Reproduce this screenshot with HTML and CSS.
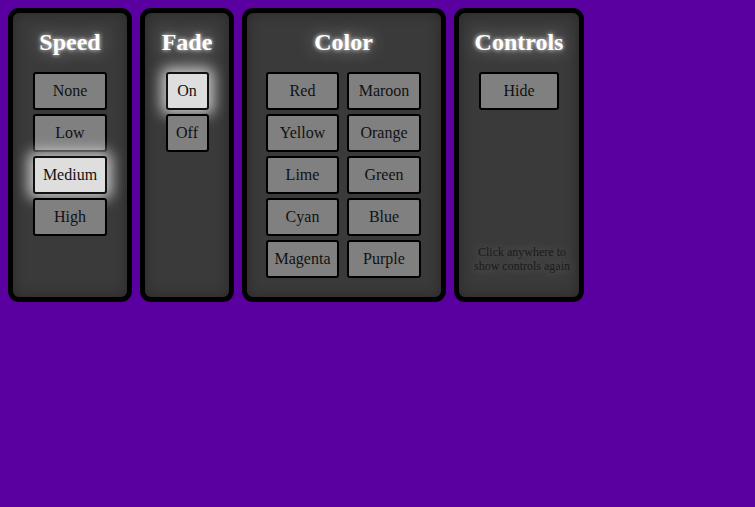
FILE: index.html
```html
<!DOCTYPE html>
<html>
<head>
<meta charset="utf-8">
<link rel="stylesheet" href="styles.css">
</head>
<body>
<div class="panels">
  <div class="panel panel-speed">
    <h2 class="title">Speed</h2>
    <div class="stack">
      <button class="btn w-speed">None</button>
      <button class="btn w-speed">Low</button>
      <button class="btn w-speed active">Medium</button>
      <button class="btn w-speed">High</button>
    </div>
  </div>
  <div class="panel panel-fade">
    <h2 class="title">Fade</h2>
    <div class="stack">
      <button class="btn w-fade active">On</button>
      <button class="btn w-fade">Off</button>
    </div>
  </div>
  <div class="panel panel-color">
    <h2 class="title">Color</h2>
    <div class="grid">
      <button class="btn">Red</button>
      <button class="btn">Maroon</button>
      <button class="btn">Yellow</button>
      <button class="btn">Orange</button>
      <button class="btn">Lime</button>
      <button class="btn">Green</button>
      <button class="btn">Cyan</button>
      <button class="btn">Blue</button>
      <button class="btn">Magenta</button>
      <button class="btn">Purple</button>
    </div>
  </div>
  <div class="panel panel-controls">
    <h2 class="title">Controls</h2>
    <div class="stack">
      <button class="btn w-hide">Hide</button>
    </div>
    <p class="hint">Click anywhere to<br>show controls again</p>
  </div>
</div>
</body>
</html>
```

FILE: styles.css
```css
html, body {
  margin: 0;
  padding: 0;
}
body {
  background: #5a00a0;
  font-family: "Liberation Serif", "Times New Roman", serif;
  width: 755px;
  height: 507px;
  overflow: hidden;
}
.panels {
  display: flex;
  align-items: stretch;
  gap: 8px;
  padding: 8px;
}
.panel {
  box-sizing: border-box;
  border: 5px solid #000;
  border-radius: 11px;
  background: #3a3a3a;
  box-shadow: inset 0 0 14px rgba(0, 0, 0, 0.3);
  display: flex;
  flex-direction: column;
  align-items: center;
  padding: 15px 0 19px;
}
.panel-speed { width: 124px; }
.panel-fade { width: 94px; }
.panel-color { width: 204px; padding-right: 1px; }
.panel-controls { width: 130px; }
.title {
  margin: 0 0 16px;
  font-size: 24px;
  line-height: 28px;
  font-weight: bold;
  color: #fff;
  text-shadow: 0 0 4px rgba(255, 255, 255, 0.9), 0 0 18px rgba(255, 255, 255, 0.55);
}
.stack {
  display: flex;
  flex-direction: column;
  gap: 4px;
}
.grid {
  display: grid;
  grid-template-columns: 73px 74px;
  column-gap: 8px;
  row-gap: 4px;
}
.btn {
  box-sizing: border-box;
  height: 38px;
  margin: 0;
  padding: 0 4px;
  border: 2px solid #000;
  border-radius: 3px;
  background: #808080;
  color: #111;
  font-family: "Liberation Serif", "Times New Roman", serif;
  font-size: 16px;
  line-height: 18px;
  white-space: nowrap;
  text-align: center;
}
.w-speed { width: 74px; }
.w-fade { width: 43px; }
.w-hide { width: 80px; }
.btn.active {
  background: #dedede;
  border-color: #111;
  box-shadow: 0 0 14px 5px rgba(255, 255, 255, 0.7);
}
.hint {
  margin: auto 0 5px;
  padding-left: 6px;
  font-size: 12px;
  line-height: 14px;
  color: #1a1a1a;
  text-align: center;
  white-space: nowrap;
  text-shadow: 0 0 12px rgba(255, 255, 255, 0.35);
}
```
